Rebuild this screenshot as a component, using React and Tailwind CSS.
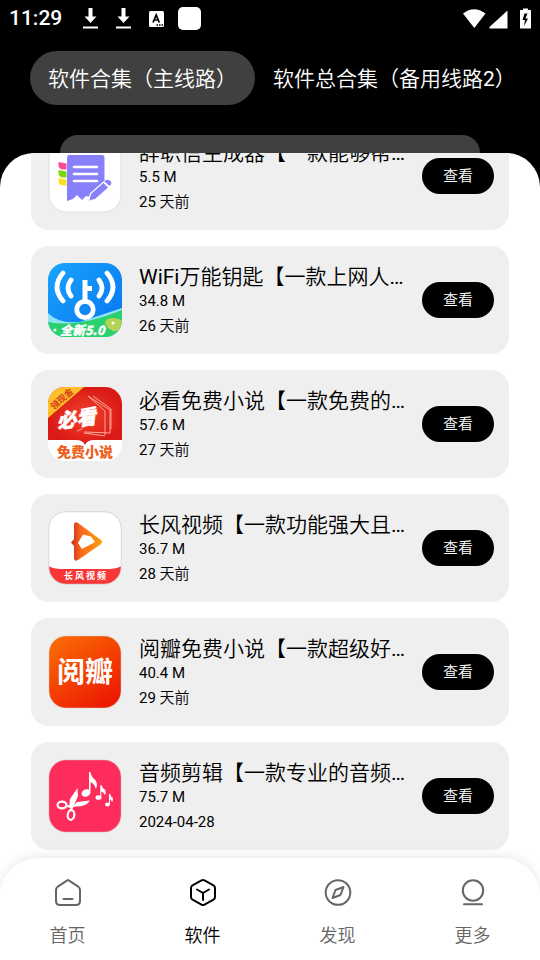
import React from 'react';

const CJK = '"Noto Sans CJK SC", sans-serif';

function NotebookIcon() {
  return (
    <svg viewBox="0 0 74 74" className="size-full" aria-hidden="true">
      <rect x="1" y="1" width="72" height="72" rx="17" fill="#fff" stroke="#ddd" />
      <path d="M20 16h34q2.500 0 2.500 3v26L43 58l-5-1-4 4-5-5-4 4-6 2V19z" fill="#8880fb" />
      <path d="M26 28h23M26 35h23M26 42h23" stroke="#fff" strokeWidth="2.600" strokeLinecap="round" />
      <path d="M10.500 23l8 1.500v6h-3q-4.500 0-5-4z" fill="#fb4a98" />
      <path d="M10.500 31l8 1.500v6h-3q-4.500 0-5-4z" fill="#7ed610" />
      <path d="M10.500 39l8 1.500v6h-3q-4.500 0-5-4z" fill="#fbe020" />
      <path d="M40.500 62.500l2-8 13-11.500 5.500 5.500-13 11.500z" fill="#8880fb" stroke="#fff" strokeWidth="1.200" />
      <path d="M56.500 42.500l1.500-1.500q3-1 5 1.500 1 2.500-1.500 4.500z" fill="#8880fb" />
    </svg>
  );
}

function WifiKeyIcon() {
  return (
    <svg viewBox="0 0 74 74" className="size-full" aria-hidden="true">
      <defs>
        <clipPath id="wk"><rect width="74" height="74" rx="17" /></clipPath>
        <linearGradient id="wkb" x1="0" y1="0" x2="1" y2="1">
          <stop offset="0" stopColor="#18a4ff" /><stop offset="1" stopColor="#0873ef" />
        </linearGradient>
      </defs>
      <g clipPath="url(#wk)">
        <rect width="74" height="74" fill="url(#wkb)" />
        <path d="M0 50q10 11 32 9l42-14v29H0z" fill="#8fe3f5" />
        <path d="M0 59q30 6 74-12v27H0z" fill="#2bd06c" />
        <path d="M57 60q1-5 8-5 6 0 9 3v7q-4 4-9 3-6-3-8-8z" fill="#b5d455" />
        <circle cx="65" cy="60" r="1.500" fill="#fff" />
        <circle cx="7" cy="67" r="1.500" fill="#fff" />
      </g>
      <g fill="none" stroke="#fff" strokeWidth="4.800" strokeLinecap="round">
        <circle cx="37" cy="46.500" r="8.200" strokeWidth="4.800" />
        <path d="M37 38V17M37 25.500h7" strokeLinecap="butt" strokeWidth="5" />
        <path d="M15 10q-12 14 0 28M23 17q-6 8 0 16M59 10q12 14 0 28M51 17q6 8 0 16" />
      </g>
      <text x="12" y="71.500" fontSize="12.500" fontWeight="900" fontStyle="italic" fill="#fff" stroke="#fff" strokeWidth=".3" fontFamily={CJK}>全新5.0</text>
    </svg>
  );
}

function NovelIcon() {
  return (
    <svg viewBox="0 0 74 74" className="size-full" aria-hidden="true">
      <defs>
        <clipPath id="nv"><rect width="74" height="74" rx="17" /></clipPath>
        <radialGradient id="nvb"><stop offset="0" stopColor="#f5432b" /><stop offset="1" stopColor="#d91a16" /></radialGradient>
      </defs>
      <g clipPath="url(#nv)">
        <rect width="74" height="74" fill="#fff" />
        <path d="M0 0h74v53H46q-7 0-9 5-2-5-9-5H0z" fill="url(#nvb)" />
        <path d="M0 0h36L0 31z" fill="#ffc12b" />
      </g>
      <text x="14" y="15" textAnchor="middle" transform="rotate(-41 14 12)" fontSize="9" fontWeight="700" fill="#d93817" fontFamily={CJK}>领现金</text>
      <path d="M40 9l22 14v23l-26-1M45 9l18 13v20M36 46l21 3M40 9l17 15v24M34 42l-5 2" fill="none" stroke="#ffb4a5" strokeWidth=".9" strokeLinejoin="round" />
      <text x="8" y="39" transform="rotate(-8 28 30)" fontSize="20" fontWeight="900" fontStyle="italic" fill="#fff" stroke="#fff" strokeWidth=".4" fontFamily={CJK}>必看</text>
      <text x="37" y="70" textAnchor="middle" fontSize="14" fontWeight="900" fill="#ef5f1d" fontFamily={CJK}>免费小说</text>
    </svg>
  );
}

function VideoIcon() {
  return (
    <svg viewBox="0 0 74 74" className="size-full" aria-hidden="true">
      <defs>
        <clipPath id="vd"><rect x="1" y="1" width="72" height="72" rx="17" /></clipPath>
        <linearGradient id="vdb"><stop offset="0" stopColor="#c92a1a" /><stop offset=".3" stopColor="#f9661c" /><stop offset="1" stopColor="#fca00c" /></linearGradient>
      </defs>
      <g clipPath="url(#vd)">
        <rect width="74" height="74" fill="#fff" />
        <path d="M0 55q5 3 12 3h50q7 0 12-3v19H0z" fill="#f93636" />
      </g>
      <path d="M26 14q0-4 4-2l23 17q2 2 0 4L30 49q-4 2-4-2V35l-3-3.500 3-3.500z" fill="url(#vdb)" />
      <path d="M35 23.500l8 2 4 5.500L34 38l-4-6z" fill="#fff" />
      <text x="37" y="68" textAnchor="middle" fontSize="9" fontWeight="700" fill="#fff" fontFamily={CJK}>长 风 视 频</text>
      <rect x=".8" y=".8" width="72.400" height="72.400" rx="17" fill="none" stroke="#ccc" strokeWidth=".7" />
    </svg>
  );
}

function PetalIcon() {
  return (
    <svg viewBox="0 0 74 74" className="size-full" aria-hidden="true">
      <defs>
        <linearGradient id="ptb" x1="0" y1="0" x2=".7" y2="1"><stop offset="0" stopColor="#fc7004" /><stop offset="1" stopColor="#ed1b02" /></linearGradient>
      </defs>
      <rect x="1" y="1" width="72" height="72" rx="17" fill="url(#ptb)" stroke="#ddc8bc" strokeWidth=".5" />
      <text x="37" y="47" textAnchor="middle" fontSize="28" fontWeight="700" fill="#fff" fontFamily={CJK}>阅瓣</text>
    </svg>
  );
}

function MusicCutIcon() {
  return (
    <svg viewBox="0 0 74 74" className="size-full" aria-hidden="true">
      <rect x="1" y="1" width="72" height="72" rx="17" fill="#fd2c5c" stroke="#dba5b0" strokeWidth=".5" />
      <g fill="#fff">
        <ellipse cx="38" cy="34" rx="4.600" ry="3.600" transform="rotate(-25 38 34)" />
        <path d="M41 13h1.300q1 5 5 8 3 4 .5 9-1-5-5-7l-.5 11H41z" />
        <ellipse cx="50.500" cy="38.500" rx="3" ry="2.300" />
        <path d="M52.300 26h1q1 3 4 5 1 3-.5 5-1-3-3.500-3.500v5.500h-1z" />
        <ellipse cx="59.500" cy="45.500" rx="2.400" ry="1.900" />
        <path d="M61 35h1q1 3 3 4 0 3-1 4-1-3-2-2.500v4.500h-1z" />
        <path d="M29.500 29l.5 8-5 12-4-1 1-8z" />
        <path d="M24 48l5-5 13-1.500q-3 6-14 6z" />
      </g>
      <g fill="none" stroke="#fff" strokeWidth="2.200">
        <ellipse cx="14" cy="46" rx="4.500" ry="3.300" />
        <ellipse cx="23" cy="56" rx="3.300" ry="4.800" transform="rotate(8 23 56)" />
        <path d="M18 47l6 1-1 4" />
      </g>
    </svg>
  );
}

const apps = [
  { title: '辞职信生成器【一款能够帮…', size: '5.5 M', date: '25 天前', Icon: NotebookIcon },
  { title: 'WiFi万能钥匙【一款上网人…', size: '34.8 M', date: '26 天前', Icon: WifiKeyIcon },
  { title: '必看免费小说【一款免费的…', size: '57.6 M', date: '27 天前', Icon: NovelIcon },
  { title: '长风视频【一款功能强大且…', size: '36.7 M', date: '28 天前', Icon: VideoIcon },
  { title: '阅瓣免费小说【一款超级好…', size: '40.4 M', date: '29 天前', Icon: PetalIcon },
  { title: '音频剪辑【一款专业的音频…', size: '75.7 M', date: '2024-04-28', Icon: MusicCutIcon },
];

const tabs = [
  {
    label: '首页',
    icon: <path d="M13.300 2.300L3.700 8.700Q2 10 2 12v11q0 4 4 4h16q4 0 4-4V12q0-2-1.700-3.300L14.700 2.300q-.7-.5-1.400 0zM9.500 21h9" />,
  },
  {
    label: '软件',
    active: true,
    icon: <path d="M12.500 2.400L3.500 7.300Q2 8.200 2 10v9q0 1.800 1.500 2.700l9 5q1.500.8 3 0l9-5Q26 20.800 26 19v-9q0-1.800-1.500-2.700l-9-4.900q-1.500-.8-3 0zM8 11.500l6 3.500 6-3.500M14 15v7" />,
  },
  {
    label: '发现',
    icon: <><circle cx="14" cy="14.500" r="12.300" /><path d="M19.500 9l-3 8-8 3 3-8z" /></>,
  },
  {
    label: '更多',
    icon: <><circle cx="14" cy="12.500" r="10.200" /><path d="M5 26.300h18" /></>,
  },
];

function DownloadIcon() {
  return (
    <svg viewBox="0 0 15 21" className="h-[21px] w-[15px]" fill="#fff" aria-hidden="true">
      <path d="M5.500 0h4v8.500h4l-6 6.500-6-6.500h4zM0 18.500h15v2H0z" />
    </svg>
  );
}

function StatusBar() {
  return (
    <div className="flex h-[37px] items-center justify-between px-[9px] text-white">
      <div className="flex items-center">
        <span className="w-[74px] text-[21px] font-medium leading-none">11:29</span>
        <DownloadIcon />
        <span className="w-[18px]" />
        <DownloadIcon />
        <svg viewBox="0 0 15 16" className="ml-[18px] h-4 w-[15px]" aria-hidden="true">
          <rect width="15" height="16" rx="1.500" fill="#fff" />
          <path d="M4 11.500L7.200 4l3.100 7.500M5.200 9h4" fill="none" stroke="#000" strokeWidth="1.700" />
          <path d="M7.500 14h1.500M10 14h1.500M12.500 14H14" stroke="#000" strokeWidth="1.300" />
        </svg>
        <span className="ml-[14px] size-[23px] rounded-[5px] bg-white" />
      </div>
      <svg viewBox="0 0 68 21" className="h-[21px] w-[68px]" fill="#fff" aria-hidden="true">
        <path d="M0 5.500Q11-3 22.500 5.500L11.300 20z" />
        <path d="M44.500 2.500V20.500H26.500V19z" />
        <path fillRule="evenodd" d="M57.500 2H60V.5h5V2h2.500q.5 0 .5.500V20q0 .5-.5.500h-10q-.5 0-.5-.5V2.500q0-.5.500-.5zM61.500 5.500L59.500 12h2.500l-1 6 4-7.500h-2.500l2-5z" />
      </svg>
    </div>
  );
}

function AppCard({ title, size, date, Icon }) {
  return (
    <li className="flex items-center rounded-[18px] bg-[#efefef] py-4 pl-[17px] pr-[15px]">
      <div className="size-[74px] shrink-0"><Icon /></div>
      <div className="ml-[17px] min-w-0 flex-1">
        <h2 className="overflow-hidden whitespace-nowrap text-[21px] leading-[30px]">{title}</h2>
        <p className="text-[15px] leading-[18px] font-normal">{size}</p>
        <p className="mt-1 text-[15px] leading-6">{date}</p>
      </div>
      <button type="button" className="ml-4 h-9 w-[72px] shrink-0 rounded-full bg-black text-[15px] leading-none text-white">
        查看
      </button>
    </li>
  );
}

export default function App() {
  return (
    <div className="flex h-dvh flex-col overflow-hidden bg-black font-[Roboto,'Noto_Sans_CJK_SC_DemiLight','Noto_Sans_CJK_SC',sans-serif] font-normal text-black">
      <header className="shrink-0">
        <StatusBar />
        <div className="mt-[14px] flex pl-[30px] text-[21px] whitespace-nowrap text-white">
          <button type="button" className="h-[54px] rounded-full bg-[#404040] px-[18px] pt-[3px]">软件合集（主线路）</button>
          <button type="button" className="h-[54px] px-[18px] pt-[3px]">软件总合集（备用线路2）</button>
        </div>
        <div className="mx-[60px] mt-[30px] h-[18px] rounded-t-[18px] bg-[#404040]" />
      </header>
      <main className="min-h-0 flex-1 overflow-hidden rounded-t-[34px] bg-white">
        <ul className="-mt-[31px] flex flex-col gap-4 px-[31px]">
          {apps.map((app) => <AppCard key={app.title} {...app} />)}
        </ul>
      </main>
      <div className="shrink-0 bg-white">
        <nav className="grid h-[102px] grid-cols-4 rounded-t-[38px] bg-white shadow-[0_-2px_12px_rgba(0,0,0,0.09)]">
          {tabs.map(({ label, icon, active }) => (
            <a
              key={label}
              href="#"
              aria-current={active ? 'page' : undefined}
              className={`flex flex-col items-center pt-5 ${active ? 'text-black' : 'text-[#666]'}`}
            >
              <svg viewBox="0 0 28 29" className="h-[29px] w-7" fill="none" stroke="currentColor" strokeWidth="2" strokeLinecap="round" strokeLinejoin="round" aria-hidden="true">
                {icon}
              </svg>
              <span className="mt-[17px] text-[18px] leading-6">{label}</span>
            </a>
          ))}
        </nav>
      </div>
    </div>
  );
}
